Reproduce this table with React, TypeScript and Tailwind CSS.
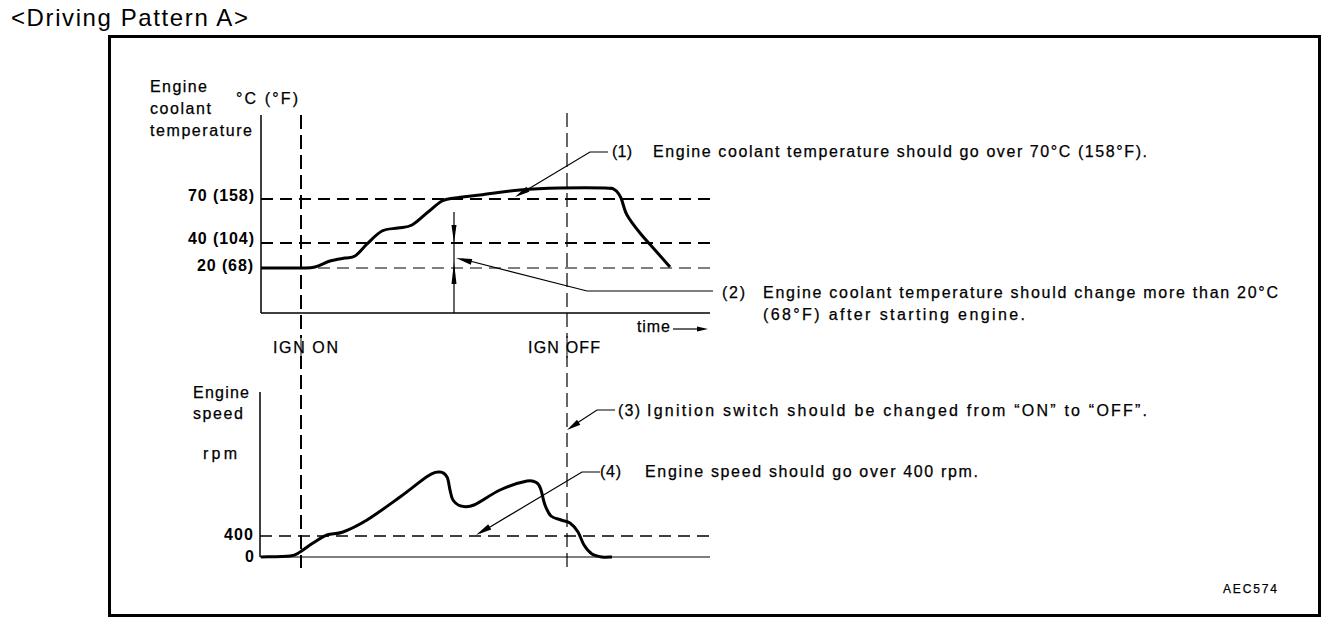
type Pt = [number, number];

// catmull-rom -> cubic bezier, keeps the hand-drawn curves smooth
const smoothPath = (pts: Pt[]) => {
  let d = `M${pts[0][0]},${pts[0][1]}`;
  for (let i = 0; i < pts.length - 1; i++) {
    const p0 = pts[i - 1] ?? pts[i];
    const p1 = pts[i];
    const p2 = pts[i + 1];
    const p3 = pts[i + 2] ?? p2;
    const c1x = p1[0] + (p2[0] - p0[0]) / 6;
    const c1y = p1[1] + (p2[1] - p0[1]) / 6;
    const c2x = p2[0] - (p3[0] - p1[0]) / 6;
    const c2y = p2[1] - (p3[1] - p1[1]) / 6;
    d += ` C${c1x.toFixed(1)},${c1y.toFixed(1)} ${c2x.toFixed(1)},${c2y.toFixed(1)} ${p2[0]},${p2[1]}`;
  }
  return d;
};

const head = (tip: Pt, from: Pt, len = 14, half = 3) => {
  const dx = from[0] - tip[0];
  const dy = from[1] - tip[1];
  const l = Math.hypot(dx, dy);
  const ux = dx / l;
  const uy = dy / l;
  const bx = tip[0] + ux * len;
  const by = tip[1] + uy * len;
  return `${tip[0]},${tip[1]} ${bx - uy * half},${by + ux * half} ${bx + uy * half},${by - ux * half}`;
};

const tempCurve: Pt[] = [
  [261, 268], [300, 268], [315, 267], [330, 261], [345, 258], [355, 256],
  [367, 244], [382, 231], [398, 228], [412, 225], [428, 212], [442, 201],
  [455, 198], [480, 195], [520, 190], [560, 188], [605, 188], [615, 190],
  [621, 198], [627, 215], [640, 233], [655, 250], [670, 267],
];

const speedCurve: Pt[] = [
  [261, 557], [290, 556], [300, 552], [313, 543], [327, 535], [343, 532],
  [367, 520], [400, 497], [428, 476], [440, 472], [447, 477], [450, 490],
  [453, 500], [461, 506], [474, 505], [500, 490], [527, 481], [537, 483],
  [541, 490], [545, 505], [551, 516], [561, 520], [570, 523], [578, 532],
  [584, 545], [592, 554], [602, 557], [612, 557],
];

type LabelProps = {
  x: number;
  y: number;
  w?: number;
  bold?: boolean;
  size?: number;
  children: React.ReactNode;
};

function Label({ x, y, w, bold, size = 16, children }: LabelProps) {
  return (
    <text
      x={x}
      y={y}
      fontSize={size}
      fontWeight={bold ? 700 : 400}
      textLength={w}
      lengthAdjust={w ? "spacing" : undefined}
      fill="#000"
      stroke={bold ? undefined : "#000"}
      strokeWidth={bold ? undefined : 0.25}
    >
      {children}
    </text>
  );
}

export default function App() {
  return (
    <div className="w-[1344px] h-[624px] bg-white text-black overflow-hidden font-['Liberation_Sans',Arial,sans-serif]">
      <h1 className="pl-[11px] pt-[1px] text-[24px] leading-[34px] tracking-[1.6px] font-normal">
        &lt;Driving Pattern A&gt;
      </h1>

      <div className="ml-[108px] w-[1213px] h-[582px] border-[3px] border-black">
        <svg
          width={1207}
          height={576}
          viewBox="111 38 1207 576"
          className="block"
          fontFamily="'Liberation Sans', Arial, sans-serif"
        >
          {/* ---------- coolant temperature chart ---------- */}
          <Label x={150} y={92} w={57}>Engine</Label>
          <Label x={150} y={114} w={61}>coolant</Label>
          <Label x={150} y={136} w={102}>temperature</Label>
          <Label x={236} y={104} w={62}>°C (°F)</Label>

          <Label x={188} y={201} w={66} bold>70 (158)</Label>
          <Label x={188} y={244} w={66} bold>40 (104)</Label>
          <Label x={197} y={271} w={56} bold>20 (68)</Label>

          <line x1={261} y1={115} x2={261} y2={313} stroke="#000" strokeWidth={1.5} />
          <line x1={261} y1={313} x2={710} y2={313} stroke="#000" strokeWidth={1.5} />

          <line x1={261} y1={199} x2={712} y2={199} stroke="#000" strokeWidth={2} strokeDasharray="12 7" />
          <line x1={261} y1={243} x2={712} y2={243} stroke="#000" strokeWidth={2} strokeDasharray="12 7" />
          <line x1={261} y1={268} x2={712} y2={268} stroke="#000" strokeWidth={1.2} strokeDasharray="12 7" />

          <path d={smoothPath(tempCurve)} fill="none" stroke="#000" strokeWidth={3} strokeLinejoin="round" />

          {/* change arrow */}
          <line x1={454} y1={212} x2={454} y2={313} stroke="#000" strokeWidth={1.2} />
          <polygon points={head([454, 243], [454, 200], 18, 2.5)} fill="#000" />
          <polygon points={head([454, 262], [454, 300], 22, 2.5)} fill="#000" />

          {/* time axis */}
          <Label x={637} y={332} w={33}>time</Label>
          <line x1={673} y1={329} x2={698} y2={329} stroke="#000" strokeWidth={1.2} />
          <polygon points={head([708, 329], [670, 329], 11, 2.5)} fill="#000" />

          {/* ignition markers */}
          <line x1={301} y1={115} x2={301} y2={568} stroke="#000" strokeWidth={2} strokeDasharray="14 6" />
          <line x1={567} y1={113} x2={567} y2={570} stroke="#000" strokeWidth={1.2} strokeDasharray="14 6" />
          <rect x={272} y={338} width={66} height={18} fill="#fff" />
          <rect x={527} y={338} width={74} height={18} fill="#fff" />
          <line x1={301} y1={336} x2={301} y2={358} stroke="#000" strokeWidth={1} />
          <line x1={567} y1={336} x2={567} y2={358} stroke="#000" strokeWidth={1} />
          <Label x={273} y={353} w={65}>IGN ON</Label>
          <Label x={528} y={353} w={72}>IGN OFF</Label>

          {/* ---------- engine speed chart ---------- */}
          <Label x={193} y={398} w={56}>Engine</Label>
          <Label x={193} y={419} w={50}>speed</Label>
          <Label x={203} y={459} w={34}>rpm</Label>
          <Label x={224} y={540} w={29} bold>400</Label>
          <Label x={245} y={562} bold>0</Label>

          <line x1={260} y1={392} x2={260} y2={557} stroke="#000" strokeWidth={1.5} />
          <line x1={260} y1={557} x2={710} y2={557} stroke="#000" strokeWidth={1.2} />
          <line x1={260} y1={536} x2={712} y2={536} stroke="#000" strokeWidth={1.6} strokeDasharray="12 7" />

          <path d={smoothPath(speedCurve)} fill="none" stroke="#000" strokeWidth={3} strokeLinejoin="round" />

          {/* ---------- callouts ---------- */}
          <polyline points="608,152 590,152 520,194" fill="none" stroke="#000" strokeWidth={1.2} />
          <polygon points={head([515, 197], [590, 152], 15, 3)} fill="#000" />
          <Label x={612} y={157} w={20}>(1)</Label>
          <Label x={653} y={157} w={494}>Engine coolant temperature should go over 70°C (158°F).</Label>

          <polyline points="713,291 587,291 462,259" fill="none" stroke="#000" strokeWidth={1.2} />
          <polygon points={head([456, 258], [587, 291], 16, 3)} fill="#000" />
          <Label x={722} y={298} w={23}>(2)</Label>
          <Label x={763} y={298} w={515}>Engine coolant temperature should change more than 20°C</Label>
          <Label x={763} y={320} w={262}>(68°F) after starting engine.</Label>

          <polyline points="615,410 597,410 571,427" fill="none" stroke="#000" strokeWidth={1.2} />
          <polygon points={head([567, 430], [597, 410], 14, 3)} fill="#000" />
          <Label x={618} y={416} w={22}>(3)</Label>
          <Label x={647} y={416} w={500}>Ignition switch should be changed from “ON” to “OFF”.</Label>

          <polyline points="600,472 582,472 480,533" fill="none" stroke="#000" strokeWidth={1.2} />
          <polygon points={head([476, 535], [582, 472], 16, 3)} fill="#000" />
          <Label x={600} y={477} w={21}>(4)</Label>
          <Label x={645} y={477} w={333}>Engine speed should go over 400 rpm.</Label>

          <Label x={1223} y={593} w={54} size={12}>AEC574</Label>
        </svg>
      </div>
    </div>
  );
}
